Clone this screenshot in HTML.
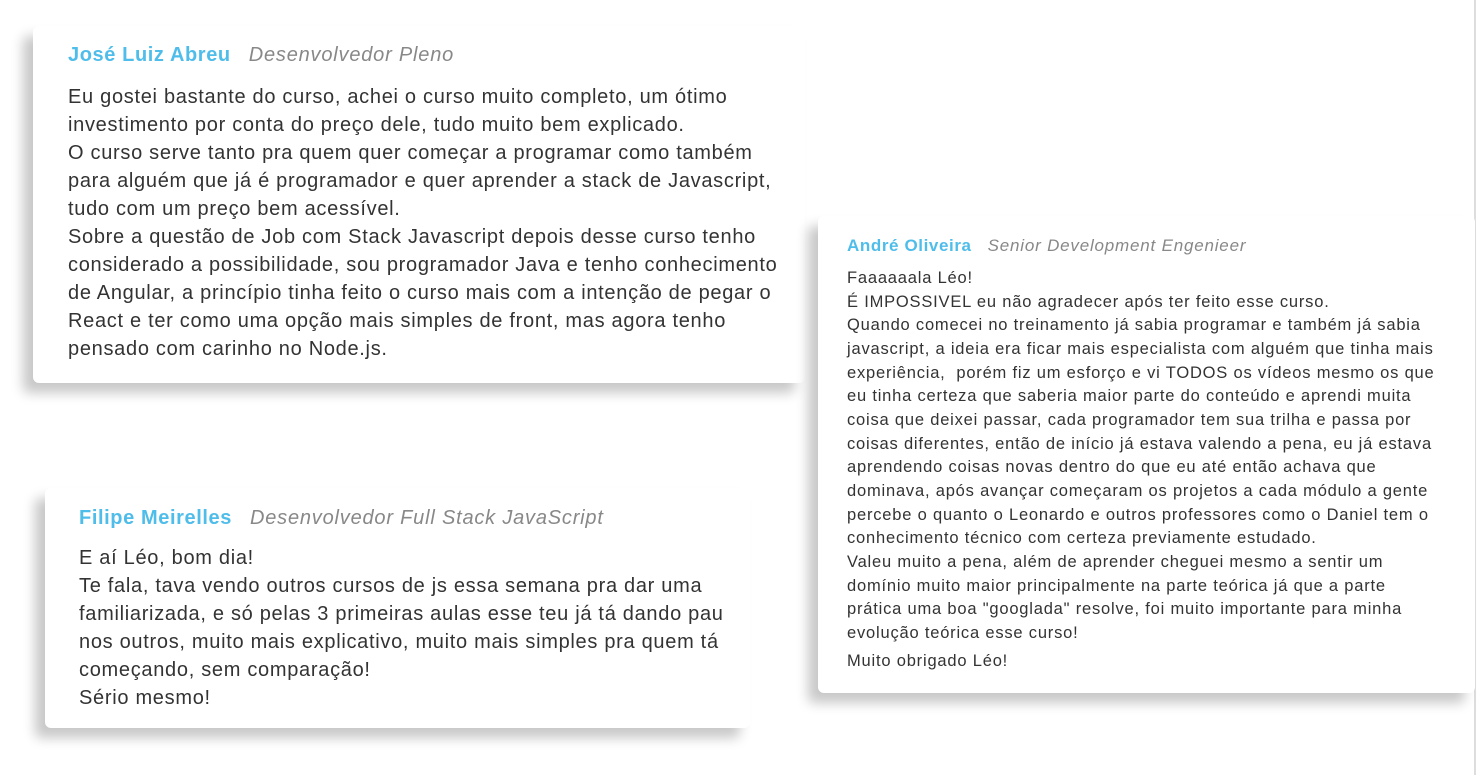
<!DOCTYPE html>
<html><head><meta charset="utf-8"><style>
body{margin:0;width:1477px;height:775px;background:#fff;position:relative;overflow:hidden;font-family:"Liberation Sans",Arial,sans-serif;color:#333}
.c{position:absolute;background:#fff;border-radius:6px;box-shadow:-10px 10px 12px rgba(0,0,0,.22)}
.n{color:#4fbdea;font-weight:bold;letter-spacing:0.6px}
.r{color:#888;font-style:italic;margin-left:18px;font-weight:normal;letter-spacing:0.8px}
.vl{position:absolute;left:1474px;top:0;width:2px;height:775px;background:#ddd}
</style></head><body>
<div class="vl"></div>
<div class="c" style="left:33px;top:26px;width:772px;height:357px">
<div style="position:absolute;left:35px;top:18px;font-size:20px" class="n">José Luiz Abreu<span class="r">Desenvolvedor Pleno</span></div>
<div style="position:absolute;left:35px;top:57px;font-size:20px;line-height:28px;width:740px;letter-spacing:0.7px">Eu gostei bastante do curso, achei o curso muito completo, um ótimo<br>investimento por conta do preço dele, tudo muito bem explicado.<br>O curso serve tanto pra quem quer começar a programar como também<br>para alguém que já é programador e quer aprender a stack de Javascript,<br>tudo com um preço bem acessível.<br>Sobre a questão de Job com Stack Javascript depois desse curso tenho<br>considerado a possibilidade, sou programador Java e tenho conhecimento<br>de Angular, a princípio tinha feito o curso mais com a intenção de pegar o<br>React e ter como uma opção mais simples de front, mas agora tenho<br>pensado com carinho no Node.js.</div>
</div>
<div class="c" style="left:818px;top:216px;width:657px;height:477px">
<div style="position:absolute;left:29px;top:20px;font-size:17px" class="n">André Oliveira<span class="r" style="margin-left:16px">Senior Development Engenieer</span></div>
<div style="position:absolute;left:29px;top:51px;font-size:16.5px;line-height:23.65px;width:625px;letter-spacing:0.8px">Faaaaaala Léo!<br>É IMPOSSIVEL eu não agradecer após ter feito esse curso.<br>Quando comecei no treinamento já sabia programar e também já sabia<br>javascript, a ideia era ficar mais especialista com alguém que tinha mais<br>experiência,&nbsp; porém fiz um esforço e vi TODOS os vídeos mesmo os que<br>eu tinha certeza que saberia maior parte do conteúdo e aprendi muita<br>coisa que deixei passar, cada programador tem sua trilha e passa por<br>coisas diferentes, então de início já estava valendo a pena, eu já estava<br>aprendendo coisas novas dentro do que eu até então achava que<br>dominava, após avançar começaram os projetos a cada módulo a gente<br>percebe o quanto o Leonardo e outros professores como o Daniel tem o<br>conhecimento técnico com certeza previamente estudado.<br>Valeu muito a pena, além de aprender cheguei mesmo a sentir um<br>domínio muito maior principalmente na parte teórica já que a parte<br>prática uma boa "googlada" resolve, foi muito importante para minha<br>evolução teórica esse curso!<div style="margin-top:4px">Muito obrigado Léo!</div></div>
</div>
<div class="c" style="left:45px;top:488px;width:705px;height:240px">
<div style="position:absolute;left:34px;top:19px;font-size:20px" class="n">Filipe Meirelles<span class="r">Desenvolvedor Full Stack JavaScript</span></div>
<div style="position:absolute;left:34px;top:56px;font-size:20px;line-height:28px;width:670px;letter-spacing:0.7px">E aí Léo, bom dia!<br>Te fala, tava vendo outros cursos de js essa semana pra dar uma<br>familiarizada, e só pelas 3 primeiras aulas esse teu já tá dando pau<br>nos outros, muito mais explicativo, muito mais simples pra quem tá<br>começando, sem comparação!<br>Sério mesmo!</div>
</div>
</body></html>
